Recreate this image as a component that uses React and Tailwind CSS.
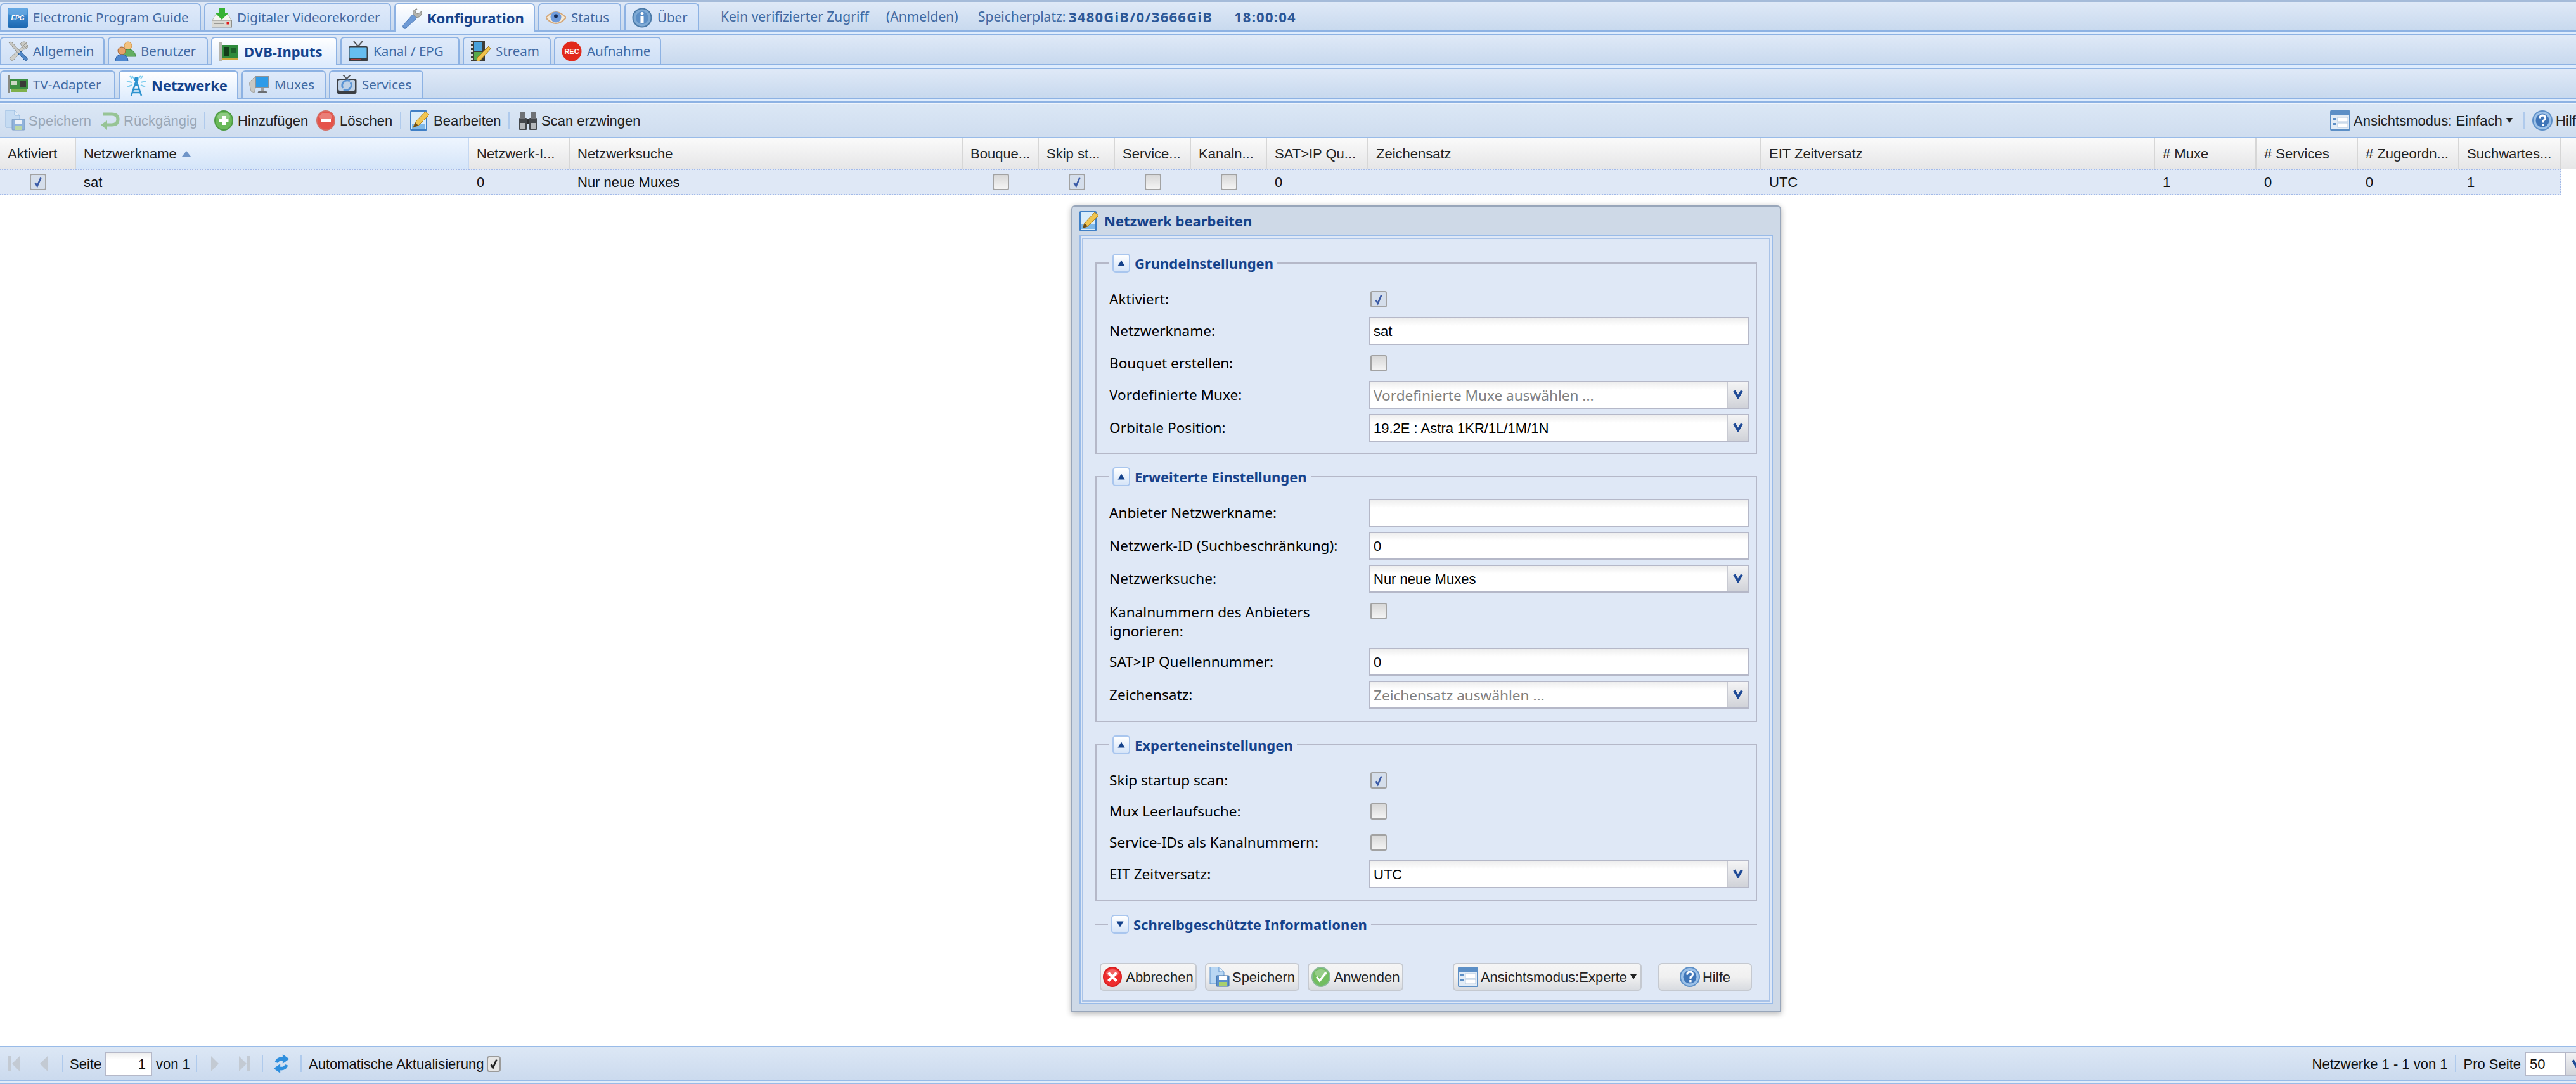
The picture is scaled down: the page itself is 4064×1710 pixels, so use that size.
import React from 'react';

// --- icons, all drawn on a 32x32 box ---
const Ic = ({ children, className = 'w-[32px] h-[32px] shrink-0' }) => (
  <svg viewBox="0 0 32 32" className={className}>{children}</svg>
);

const IconEpg = () => (
  <Ic>
    <defs><linearGradient id="epg" x1="0" y1="0" x2="0" y2="1"><stop offset="0" stopColor="#4d9be0" /><stop offset="1" stopColor="#1d68b0" /></linearGradient></defs>
    <rect width="32" height="32" rx="3" fill="url(#epg)" />
    <rect x="1" y="1" width="30" height="10" rx="2" fill="#7db8ea" opacity=".5" />
    <text x="16" y="20" textAnchor="middle" fontSize="10" fontWeight="700" fontStyle="italic" fontFamily="Liberation Sans" fill="#fff">EPG</text>
  </Ic>
);
const IconDvr = () => (
  <Ic>
    <path d="M1 20 L6 11 H26 L31 20Z" fill="#f6f6f2" stroke="#b9b9b2" />
    <rect x="0.5" y="20" width="31" height="11" fill="#d9d9d4" stroke="#8f8f8a" />
    <rect x="4" y="24" width="16" height="2" fill="#9a9a96" />
    <rect x="23.5" y="22.5" width="4" height="4" fill="#e11919" />
    <path d="M11 0 H21 V8 H27 L16 19 L5 8 H11Z" fill="#37b234" />
  </Ic>
);
const IconWrench = () => (
  <Ic>
    <path d="M2 27 L18 9 L24 15 L7 31 Q3 32 1.5 30Z" fill="#6d9ad6" stroke="#4f7cb8" />
    <path d="M18 10 Q16 3 23 1 L24 1 L21 6 L25 9 L31 5 Q32 13 24 15Z" fill="#b4b4ae" stroke="#8b8b85" />
  </Ic>
);
const IconEye = () => (
  <Ic>
    <path d="M0 16 Q16 -2 32 16 Q16 34 0 16Z" fill="#f3ead9" stroke="#d5a97c" strokeWidth="2" />
    <circle cx="16" cy="15" r="8.5" fill="#6f9bdc" />
    <circle cx="16" cy="13.5" r="3" fill="#152a55" />
  </Ic>
);
const IconInfo = () => (
  <Ic>
    <circle cx="16" cy="16" r="14.5" fill="#7ea9d4" stroke="#4b7aa8" strokeWidth="2" />
    <circle cx="16" cy="16" r="10" fill="#5c8fc6" />
    <circle cx="16" cy="9.5" r="2.4" fill="#fff" />
    <rect x="13.5" y="13" width="5" height="11" fill="#fff" />
  </Ic>
);
const IconTools = () => (
  <Ic>
    <path d="M29 3 L3 27 L6 31 L10 29 L31 7Z" fill="#cfcfca" stroke="#9b9b95" />
    <path d="M20 4 Q24 -1 30 2 L25 7 L28 10 L32 6 Q32 12 26 13Z" fill="#c9c9c4" stroke="#9b9b95" />
    <path d="M2 2 L6 1 L22 18 L18 21Z" fill="#c6c6c2" stroke="#8f8f8a" />
    <path d="M17 20 L21 16 L31 27 Q32 31 28 31Z" fill="#4f86c6" stroke="#2f6099" />
  </Ic>
);
const IconUsers = () => (
  <Ic>
    <circle cx="20" cy="7" r="6" fill="#f2c27f" stroke="#d3944a" />
    <path d="M12 24 Q12 13 20 13 Q31 13 32 24Z" fill="#63ae62" stroke="#3f8a40" />
    <circle cx="10" cy="15" r="6" fill="#e6a368" stroke="#a5602d" />
    <path d="M0 32 Q0 21 10 21 Q20 21 20 32Z" fill="#4f87cf" stroke="#2f62a5" />
  </Ic>
);
const IconCard = () => (
  <Ic>
    <rect x="1" y="1" width="4" height="30" fill="#b5b5ae" />
    <rect x="5" y="5" width="26" height="22" fill="#2f8b3c" />
    <rect x="8" y="8" width="8" height="14" fill="#123d1a" />
    <rect x="19" y="9" width="8" height="9" fill="#1d5f2a" />
    <rect x="6" y="25" width="24" height="3" fill="#c9a83a" />
  </Ic>
);
const IconTv = () => (
  <Ic>
    <path d="M9 0 L16 8 L23 0" fill="none" stroke="#55585c" strokeWidth="2" />
    <rect x="1" y="8" width="30" height="24" rx="2" fill="#3b3f44" />
    <rect x="2.5" y="9.5" width="27" height="17" rx="1" fill="#66bdf0" />
    <rect x="5" y="28" width="16" height="1.5" fill="#b33a3a" />
  </Ic>
);
const IconStream = () => (
  <Ic>
    <rect x="1" y="0" width="22" height="32" fill="#3c3c38" />
    <rect x="6" y="2" width="13" height="13" fill="#49a2dc" />
    <rect x="6" y="17" width="13" height="13" fill="#58a84a" />
    <path d="M1 2h3v3h-3zM1 8h3v3h-3zM1 14h3v3h-3zM1 20h3v3h-3zM1 26h3v3h-3z" fill="#ddd" />
    <path d="M11 26 L29 8 L32 12 L15 31 L10 32Z" fill="#eec24c" stroke="#a87d1d" />
  </Ic>
);
const IconRec = () => (
  <Ic>
    <circle cx="16" cy="16" r="15.5" fill="#e1291b" />
    <text x="16" y="20" textAnchor="middle" fontSize="11" fontWeight="700" fontFamily="Liberation Sans" fill="#fff">REC</text>
  </Ic>
);
const IconAdapter = () => (
  <Ic>
    <rect x="0" y="0" width="3" height="28" fill="#8a8a84" />
    <rect x="3" y="6" width="29" height="17" fill="#3d8f43" />
    <rect x="6" y="9" width="9" height="7" fill="#ccd8c4" />
    <rect x="19" y="9" width="10" height="10" fill="#3b3b38" />
    <rect x="6" y="23" width="24" height="4" fill="#7fb04c" />
  </Ic>
);
const IconTower = () => (
  <Ic>
    <path d="M16 8 L8 32 M16 8 L24 32 M11 22 H21 M9.5 27 H22.5 M13 15 H19" stroke="#2d93cf" strokeWidth="2.5" fill="none" />
    <circle cx="16" cy="6" r="3.5" fill="#2d93cf" />
    <path d="M9 1 L13 5 M23 1 L19 5 M1 9 L9 11 M31 9 L23 11 M2 18 L9 15 M30 18 L23 15 M6 1 L9 5 M26 1 L23 5" stroke="#7fcdee" strokeWidth="2" fill="none" />
  </Ic>
);
const IconMuxes = () => (
  <Ic>
    <path d="M0 12 L8 4 L14 6 L8 28 L3 26Z" fill="#c8c8c4" stroke="#a5a5a1" />
    <rect x="9" y="2" width="23" height="19" fill="#8f9499" />
    <rect x="11" y="4" width="19" height="15" fill="#2e9be8" />
    <path d="M15 25 L27 25 L29 29 L13 29Z" fill="#6b6e72" />
    <rect x="19" y="21" width="5" height="5" fill="#a0a0a0" />
  </Ic>
);
const IconServices = () => (
  <Ic>
    <path d="M10 0 L16 6 L22 0" fill="none" stroke="#55585c" strokeWidth="2" />
    <rect x="0.5" y="6" width="31" height="24" rx="3" fill="#3c3f43" />
    <rect x="3" y="8" width="26" height="17" rx="2" fill="#bfd1e6" />
    <path d="M10 21 A8 8 0 0 1 21 10 M22 12 A8 8 0 0 1 11 23" fill="none" stroke="#5b94d4" strokeWidth="3" />
  </Ic>
);
const IconSave = ({ dim }) => (
  <Ic>
    <g opacity={dim ? 0.55 : 1}>
      <path d="M1 0 H15 L23 8 V27 H1Z" fill="#b9d7f3" stroke="#5f95cf" />
      <path d="M15 0 V8 H23" fill="#eaf3fb" stroke="#5f95cf" />
      <rect x="11" y="14" width="20" height="17" rx="1" fill="#5b8fcb" stroke="#39689f" />
      <rect x="15" y="15" width="12" height="6" fill="#fff" />
      <rect x="15" y="24" width="12" height="7" fill="#a9d06c" />
    </g>
  </Ic>
);
const IconUndo = () => (
  <Ic>
    <path d="M4 6 H18 Q28 6 28 14 Q28 23 18 23 H8" fill="none" stroke="#97c495" strokeWidth="5" />
    <path d="M11 16 L1 23 L11 31Z" fill="#97c495" />
  </Ic>
);
const Disc = ({ fill, ring }) => (
  <>
    <ellipse cx="15" cy="16" rx="14" ry="15" fill={fill} stroke={ring} strokeWidth="2" />
    <ellipse cx="15" cy="10" rx="10" ry="6" fill="#fff" opacity=".25" />
  </>
);
const IconPlus = () => (
  <Ic><Disc fill="#69b958" ring="#4e9b44" /><path d="M12 9 H18 V13.5 H22.5 V19 H18 V23 H12 V19 H7.5 V13.5 H12Z" fill="#fff" /></Ic>
);
const IconMinus = () => (
  <Ic><Disc fill="#e5534a" ring="#d46d63" /><rect x="7" y="13.5" width="16" height="5.5" fill="#fff" /></Ic>
);
const IconCancel = () => (
  <Ic><Disc fill="#ee2d2d" ring="#d81f1f" /><path d="M10 8 L15 13 L20 8 L23 11 L18 16 L23 21 L20 24 L15 19 L10 24 L7 21 L12 16 L7 11Z" fill="#fff" /></Ic>
);
const IconApply = () => (
  <Ic><Disc fill="#72bd5f" ring="#8bb99a" /><path d="M8 16 L13 22 L23 9" fill="none" stroke="#fff" strokeWidth="3.5" /></Ic>
);
const IconEdit = () => (
  <Ic>
    <rect x="1" y="1" width="25" height="30" rx="1" fill="#d9ecfb" stroke="#3f7fc6" strokeWidth="2" />
    <rect x="3" y="21" width="21" height="8" fill="#7fb8e8" />
    <path d="M5 27 L8 19 L24 2 L30 7 L13 24Z" fill="#f0c552" stroke="#b98a22" />
    <path d="M5 27 L8 19 L13 24Z" fill="#6b4c1d" />
  </Ic>
);
const IconScan = () => (
  <Ic>
    <rect x="2" y="12" width="12" height="19" rx="1" fill="#44474b" />
    <rect x="18" y="12" width="12" height="19" rx="1" fill="#44474b" />
    <rect x="4" y="3" width="8" height="10" fill="#6f7276" />
    <rect x="20" y="3" width="8" height="10" fill="#6f7276" />
    <rect x="14" y="14" width="4" height="7" fill="#2c2e31" />
    <rect x="4" y="20" width="8" height="9" fill="#b4b7ba" />
    <rect x="20" y="20" width="8" height="9" fill="#b4b7ba" />
  </Ic>
);
const IconView = () => (
  <Ic>
    <rect x="1" y="1" width="30" height="30" rx="1" fill="#e2ecf6" stroke="#5c8fc6" strokeWidth="2" />
    <rect x="2" y="2" width="28" height="6" fill="#5c8fc6" />
    <rect x="4" y="12" width="5" height="3" fill="#5c8fc6" />
    <rect x="4" y="20" width="5" height="3" fill="#5c8fc6" />
    <rect x="12" y="11" width="16" height="7" fill="#fff" stroke="#b4c9e0" />
    <rect x="12" y="20" width="16" height="7" fill="#fff" stroke="#b4c9e0" />
  </Ic>
);
const IconHelp = () => (
  <Ic>
    <circle cx="16" cy="16" r="15" fill="#9cc1e8" stroke="#5d8fc7" strokeWidth="2" />
    <circle cx="16" cy="16" r="10.5" fill="#3f75b8" />
    <path d="M11.5 12.5 Q12 8 16.5 8 Q21 8.5 20.5 12.5 Q20 15 17 16.5 V19.5" fill="none" stroke="#fff" strokeWidth="3" />
    <rect x="15.2" y="21" width="3.4" height="3.4" fill="#fff" />
  </Ic>
);
const IconRefresh = () => (
  <Ic className="w-[30px] h-[32px] shrink-0">
    <path d="M5 13 Q8 4 18 5 L18 0 L29 8 L18 16 L18 11 Q12 10 10 15Z" fill="#2f8fde" />
    <path d="M27 19 Q24 28 14 27 L14 32 L3 24 L14 16 L14 21 Q20 22 22 17Z" fill="#2f8fde" />
  </Ic>
);

const Chevron = () => (
  <svg viewBox="0 0 16 14" className="w-[16px] h-[14px]">
    <path d="M2 1.5 L8 11.5 L14 1.5" fill="none" stroke="#1f4a96" strokeWidth="4" />
  </svg>
);

const PageArrow = ({ bar, flip }) => (
  <svg viewBox="0 0 22 26" className={flip ? 'w-[22px] h-[26px] -scale-x-100' : 'w-[22px] h-[26px]'}>
    {bar && <rect x="1" y="1" width="5" height="24" fill="#c3cad3" />}
    <path d="M19 1 V25 L7 13Z" fill="#c3cad3" />
  </svg>
);

const Check = ({ black }) => (
  <svg viewBox="0 0 16 20" className="w-[14px] h-[19px]">
    <path d="M3 11 L6.5 17 L13 2" fill="none" stroke={black ? '#222' : '#3a5aa6'} strokeWidth="3" />
  </svg>
);

const Checkbox = ({ checked }) => (
  <div className={`w-[26px] h-[26px] flex items-center justify-center rounded-[3px] border-2 border-[#a2a2a2] ${checked ? 'bg-[#d5deeb]' : 'bg-linear-to-b from-[#d8d8d8] to-[#f4f4f4]'}`}>
    {checked && <Check />}
  </div>
);

// --- tabs ---
const Tab = ({ icon, label, width, active }) => (
  <div
    className={`${width} flex items-center gap-[8px] pl-[10px] border-x-2 border-t-2 border-[#8db2e3] rounded-t-[6px] ${
      active
        ? 'h-[45px] -mb-[2px] z-10 bg-linear-to-b from-white to-[#deecfd] text-[#15428b] font-bold text-[22px]'
        : 'h-[43px] bg-linear-to-b from-[#dfeafa] to-[#cfe0f6] text-[#416aa3]'
    }`}
  >
    {icon}
    <span className="whitespace-nowrap">{label}</span>
  </div>
);

const TabStrip = ({ children }) => (
  <div className="h-[47px] shrink-0 flex items-end gap-[5px] bg-linear-to-b from-[#dfe9f7] to-[#c8d9ee] border-b-2 border-[#8db2e3]">
    {children}
  </div>
);

const mainTabs = [
  { label: 'Electronic Program Guide', width: 'w-[317px]', icon: <IconEpg /> },
  { label: 'Digitaler Videorekorder', width: 'w-[295px]', icon: <IconDvr /> },
  { label: 'Konfiguration', width: 'w-[222px]', icon: <IconWrench />, active: true },
  { label: 'Status', width: 'w-[131px]', icon: <IconEye /> },
  { label: 'Über', width: 'w-[118px]', icon: <IconInfo /> },
];
const configTabs = [
  { label: 'Allgemein', width: 'w-[165px]', icon: <IconTools /> },
  { label: 'Benutzer', width: 'w-[158px]', icon: <IconUsers /> },
  { label: 'DVB-Inputs', width: 'w-[199px]', icon: <IconCard />, active: true },
  { label: 'Kanal / EPG', width: 'w-[188px]', icon: <IconTv /> },
  { label: 'Stream', width: 'w-[139px]', icon: <IconStream /> },
  { label: 'Aufnahme', width: 'w-[169px]', icon: <IconRec /> },
];
const inputTabs = [
  { label: 'TV-Adapter', width: 'w-[182px]', icon: <IconAdapter /> },
  { label: 'Netzwerke', width: 'w-[189px]', icon: <IconTower />, active: true },
  { label: 'Muxes', width: 'w-[133px]', icon: <IconMuxes /> },
  { label: 'Services', width: 'w-[149px]', icon: <IconServices /> },
];

// --- toolbar ---
const ToolItem = ({ icon, label, width, dim }) => (
  <div className={`${width} flex items-center gap-[5px] shrink-0 whitespace-nowrap ${dim ? 'text-[#9aa7b6]' : 'text-[#222]'}`}>
    {icon}
    <span>{label}</span>
  </div>
);
const Sep = ({ className = '' }) => <div className={`w-[2px] h-[26px] shrink-0 bg-[#afcaec] ${className}`} />;

// --- grid ---
const columns = [
  { title: 'Aktiviert', check: true },
  { title: 'Netzwerkname', value: 'sat', sorted: true },
  { title: 'Netzwerk-I...', value: '0' },
  { title: 'Netzwerksuche', value: 'Nur neue Muxes' },
  { title: 'Bouque...', check: false },
  { title: 'Skip st...', check: true },
  { title: 'Service...', check: false },
  { title: 'Kanaln...', check: false },
  { title: 'SAT>IP Qu...', value: '0' },
  { title: 'Zeichensatz', value: '' },
  { title: 'EIT Zeitversatz', value: 'UTC' },
  { title: '# Muxe', value: '1' },
  { title: '# Services', value: '0' },
  { title: '# Zugeordn...', value: '0' },
  { title: 'Suchwartes...', value: '1' },
];
const gridCols = 'grid grid-cols-[120px_620px_159px_620px_120px_120px_120px_120px_160px_620px_621px_160px_160px_160px_160px]';

// --- dialog parts ---
const Row = ({ label, mt, top, children }) => (
  <div className={`flex ${top ? 'items-start' : 'items-center'} pl-[20px] ${mt}`}>
    <div className={`w-[410px] shrink-0 text-black font-['Noto_Sans',sans-serif] text-[22.6px] pr-[40px] ${top ? 'leading-[30px]' : 'leading-[26px]'}`}>{label}</div>
    {children}
  </div>
);
const Input = ({ value, placeholder, combo }) => (
  <div className="w-[599px] h-[44px] flex border-2 border-[#b5b8c8] bg-linear-to-b from-[#eeeeee] to-white to-[30%]">
    <div className={`flex-1 pl-[5px] leading-[42px] ${value ? 'text-black' : "text-[#808080] font-['Noto_Sans',sans-serif] text-[22.6px]"}`}>{value || placeholder}</div>
    {combo && (
      <div className="w-[33px] flex items-start justify-center pt-[12px] border-l-2 border-[#c8cad2] bg-linear-to-b from-[#f4f4f5] to-[#d0d2d8]">
        <Chevron />
      </div>
    )}
  </div>
);
const CheckBoxCell = ({ checked }) => <div className="ml-[2px]"><Checkbox checked={checked} /></div>;

const Section = ({ title, open = true, mt, pb = 'pb-[19px]', children }) => (
  <fieldset className={`${mt} ${pb} ${open ? 'border-2' : 'border-t-2'} border-[#b5b8c8]`}>
    <legend className="ml-[20px] pl-[5px] pr-[6px] h-[30px] flex items-center gap-[7px]">
      <div className="w-[28px] h-[30px] flex items-center justify-center rounded-[5px] border-2 border-[#a9c6ee] bg-linear-to-b from-white to-[#d5e4f8]">
        <svg viewBox="0 0 12 12" className={open ? 'w-[12px] h-[12px]' : 'w-[12px] h-[12px] rotate-180'}>
          <path d="M6 1.5 L11.5 10.5 H0.5Z" fill="#15428b" />
        </svg>
      </div>
      <span className="font-['Noto_Sans',sans-serif] text-[22px] font-bold text-[#15428b] whitespace-nowrap">{title}</span>
    </legend>
    {children}
  </fieldset>
);

const Btn = ({ icon, label, width, arrow, className = '' }) => (
  <div className={`${width} ${className} h-[44px] shrink-0 flex items-center justify-center gap-[4px] rounded-[6px] border-2 border-[#c5c9d0] bg-linear-to-b from-[#f5f5f5] via-[#f0f0f0] to-[#d9dce1] text-[#222] whitespace-nowrap`}>
    {icon}
    <span>{label}</span>
    {arrow && <span className="ml-[1px] w-0 h-0 border-x-[5px] border-x-transparent border-t-[8px] border-t-[#222]" />}
  </div>
);

const EditDialog = () => (
  <div className="absolute left-[1690px] top-[324px] w-[1120px] border-2 border-[#98a6ba] rounded-t-[6px] bg-[#ced9e7] pb-[11px] px-[11px] shadow-[0_2px_10px_rgba(0,0,0,0.3)]">
    <div className="h-[45px] flex items-center gap-[7px]">
      <IconEdit />
      <span className="font-['Noto_Sans',sans-serif] text-[22px] font-bold text-[#15428b]">Netzwerk bearbeiten</span>
    </div>
    <div className="border-2 border-[#99bbe8] p-[2px] bg-[#dfe8f6]">
      <div className="border-2 border-[#a9c3e8] bg-[#dfe8f6] px-[19px] pt-[23px] pb-[15px]">
        <Section title="Grundeinstellungen" pb="pb-[17px]">
          <Row label="Aktiviert:" mt="mt-[29px]"><CheckBoxCell checked /></Row>
          <Row label="Netzwerkname:" mt="mt-[15px]"><Input value="sat" /></Row>
          <Row label="Bouquet erstellen:" mt="mt-[16px]"><CheckBoxCell /></Row>
          <Row label="Vordefinierte Muxe:" mt="mt-[15px]"><Input placeholder="Vordefinierte Muxe auswählen ..." combo /></Row>
          <Row label="Orbitale Position:" mt="mt-[8px]"><Input value="19.2E : Astra 1KR/1L/1M/1N" combo /></Row>
        </Section>
        <Section title="Erweiterte Einstellungen" mt="mt-[21px]">
          <Row label="Anbieter Netzwerkname:" mt="mt-[20px]"><Input /></Row>
          <Row label="Netzwerk-ID (Suchbeschränkung):" mt="mt-[8px]"><Input value="0" /></Row>
          <Row label="Netzwerksuche:" mt="mt-[8px]"><Input value="Nur neue Muxes" combo /></Row>
          <Row label="Kanalnummern des Anbieters ignorieren:" mt="mt-[16px]" top><CheckBoxCell /></Row>
          <Row label="SAT>IP Quellennummer:" mt="mt-[11px]"><Input value="0" /></Row>
          <Row label="Zeichensatz:" mt="mt-[8px]"><Input placeholder="Zeichensatz auswählen ..." combo /></Row>
        </Section>
        <Section title="Experteneinstellungen" mt="mt-[21px]">
          <Row label="Skip startup scan:" mt="mt-[28px]"><CheckBoxCell checked /></Row>
          <Row label="Mux Leerlaufsuche:" mt="mt-[23px]"><CheckBoxCell /></Row>
          <Row label="Service-IDs als Kanalnummern:" mt="mt-[23px]"><CheckBoxCell /></Row>
          <Row label="EIT Zeitversatz:" mt="mt-[15px]"><Input value="UTC" combo /></Row>
        </Section>
        <Section title="Schreibgeschützte Informationen" mt="mt-[21px]" open={false} pb="pb-0" />
        <div className="mt-[46px] ml-[7px] flex">
          <Btn width="w-[153px]" icon={<IconCancel />} label="Abbrechen" />
          <Btn width="w-[149px]" className="ml-[13px]" icon={<IconSave />} label="Speichern" />
          <Btn width="w-[151px]" className="ml-[13px]" icon={<IconApply />} label="Anwenden" />
          <Btn width="w-[298px]" className="ml-[78px]" icon={<IconView />} label="Ansichtsmodus:Experte" arrow />
          <Btn width="w-[148px]" className="ml-[26px]" icon={<IconHelp />} label="Hilfe" />
        </div>
      </div>
    </div>
  </div>
);

export default function App() {
  return (
    <div className="relative w-[4064px] h-[1710px] overflow-hidden flex flex-col bg-white text-[22px] font-['Liberation_Sans',Arial,sans-serif]">
      <div className="h-[3px] shrink-0 bg-[#a5bbd9]" />

      {/* three levels of tabs */}
      <div className="font-['Noto_Sans',sans-serif] text-[20.5px]">
        <TabStrip>
          {mainTabs.map((t) => <Tab key={t.label} {...t} />)}
          <div className="h-[43px] flex items-center text-[21px] text-[#416aa3] whitespace-nowrap ml-[29px]">
            <span className="w-[261px]">Kein verifizierter Zugriff</span>
            <span className="w-[145px]">(Anmelden)</span>
            <span className="w-[143px]">Speicherplatz:</span>
            <span className="w-[261px] font-bold text-[22px] tracking-[1.25px] text-[#2c5797]">3480GiB/0/3666GiB</span>
            <span className="font-bold text-[22px] tracking-[1.25px] text-[#2c5797]">18:00:04</span>
          </div>
        </TabStrip>
        <div className="h-[4px] bg-[#deecfd]" />
        <div className="h-[2px] bg-[#8db2e3]" />
        <TabStrip>
          {configTabs.map((t) => <Tab key={t.label} {...t} />)}
        </TabStrip>
        <div className="h-[4px] bg-[#deecfd]" />
        <div className="h-[2px] bg-[#8db2e3]" />
        <TabStrip>
          {inputTabs.map((t) => <Tab key={t.label} {...t} />)}
        </TabStrip>
        <div className="h-[4px] bg-[#deecfd]" />
        <div className="h-[2px] bg-[#8db2e3]" />
      </div>

      {/* toolbar */}
      <div className="h-[56px] shrink-0 flex items-center pl-[8px] border-t-2 border-[#eef4fc] border-b-2 border-b-[#99bbe8] bg-linear-to-b from-[#dbe7f5] to-[#cfddef]">
        <ToolItem dim width="w-[150px]" icon={<IconSave dim />} label="Speichern" />
        <ToolItem dim width="w-[164px]" icon={<IconUndo />} label="Rückgängig" />
        <Sep className="mr-[14px]" />
        <ToolItem width="w-[161px]" icon={<IconPlus />} label="Hinzufügen" />
        <ToolItem width="w-[132px]" icon={<IconMinus />} label="Löschen" />
        <Sep className="mr-[14px]" />
        <ToolItem width="w-[155px]" icon={<IconEdit />} label="Bearbeiten" />
        <Sep className="mr-[13px]" />
        <ToolItem width="w-[195px]" icon={<IconScan />} label="Scan erzwingen" />
        <div className="ml-auto flex items-center shrink-0">
          <div className="flex items-center gap-[5px] whitespace-nowrap text-[#222] w-[305px] shrink-0">
            <IconView />
            <span>Ansichtsmodus: Einfach</span>
            <span className="ml-[1px] w-0 h-0 border-x-[5px] border-x-transparent border-t-[8px] border-t-[#222]" />
          </div>
          <Sep className="mr-[12px]" />
          <div className="w-[69px] overflow-hidden flex items-center gap-[5px] text-[#222]">
            <IconHelp />
            <span>Hilfe</span>
          </div>
        </div>
      </div>

      {/* network grid */}
      <div className="flex-1 min-h-0">
        <div className="h-[48px] bg-linear-to-b from-[#fafafa] to-[#e6e6e7]">
          <div className={gridCols}>
            {columns.map((c) => (
              <div
                key={c.title}
                className={`h-[48px] flex items-center gap-[8px] pl-[12px] border-r-2 whitespace-nowrap overflow-hidden text-[#222] ${
                  c.sorted ? 'border-[#c5d8f2] bg-linear-to-b from-[#eef5fe] to-[#d5e5f9]' : 'border-[#d6d6d6]'
                }`}
              >
                {c.title}
                {c.sorted && <span className="w-0 h-0 border-x-[7px] border-x-transparent border-b-[9px] border-b-[#6f95c8]" />}
              </div>
            ))}
          </div>
        </div>
        <div className={`${gridCols} w-[4040px] h-[42px] bg-[#dfe8f6] border-y-2 border-r-2 border-dotted border-[#a3bae9] text-[#111]`}>
          {columns.map((c) => (
            <div key={c.title} className={`flex items-center ${c.check !== undefined ? 'justify-center' : 'pl-[12px]'}`}>
              {c.check !== undefined ? <Checkbox checked={c.check} /> : c.value}
            </div>
          ))}
        </div>
      </div>

      {/* pager */}
      <div className="h-[60px] shrink-0 border-t-2 border-[#99bbe8]">
        <div className="h-[52px] flex items-center overflow-hidden bg-linear-to-b from-[#dce7f5] to-[#cbdaee] text-[#111] whitespace-nowrap">
          <div className="ml-[12px]"><PageArrow bar /></div>
          <div className="ml-[22px]"><PageArrow /></div>
          <Sep className="ml-[20px]" />
          <span className="ml-[10px] w-[50px]">Seite</span>
          <div className="ml-[5px] w-[75px] h-[39px] border-2 border-[#b5b8c8] bg-linear-to-b from-[#eeeeee] to-white to-[30%] text-right pr-[8px] leading-[35px]">1</div>
          <span className="ml-[6px] w-[58px]">von 1</span>
          <Sep className="ml-[5px]" />
          <div className="ml-[19px]"><PageArrow flip /></div>
          <div className="ml-[22px]"><PageArrow bar flip /></div>
          <Sep className="ml-[17px]" />
          <div className="ml-[14px]"><IconRefresh /></div>
          <Sep className="ml-[15px]" />
          <span className="ml-[11px]">Automatische Aktualisierung</span>
          <div className="ml-[5px] w-[22px] h-[25px] flex items-center justify-center rounded-[4px] border-2 border-[#9a9a9a] bg-[#e6e6e6]">
            <Check black />
          </div>
          <div className="ml-auto flex items-center shrink-0 -mr-[18px]">
            <span>Netzwerke 1 - 1 von 1</span>
            <Sep className="ml-[11px]" />
            <span className="ml-[12px]">Pro Seite</span>
            <div className="ml-[6px] w-[99px] h-[39px] flex border-2 border-[#b5b8c8] bg-white">
              <div className="flex-1 pl-[6px] leading-[35px]">50</div>
              <div className="w-[33px] flex items-center justify-center border-l-2 border-[#b5b8c8] bg-linear-to-b from-[#f2f2f4] to-[#d2d4da]"><Chevron /></div>
            </div>
          </div>
        </div>
        <div className="h-[2px] bg-[#99bbe8]" />
        <div className="h-[2px] bg-[#e2ecf9]" />
        <div className="h-[2px] bg-[#99bbe8]" />
      </div>

      <EditDialog />
    </div>
  );
}
